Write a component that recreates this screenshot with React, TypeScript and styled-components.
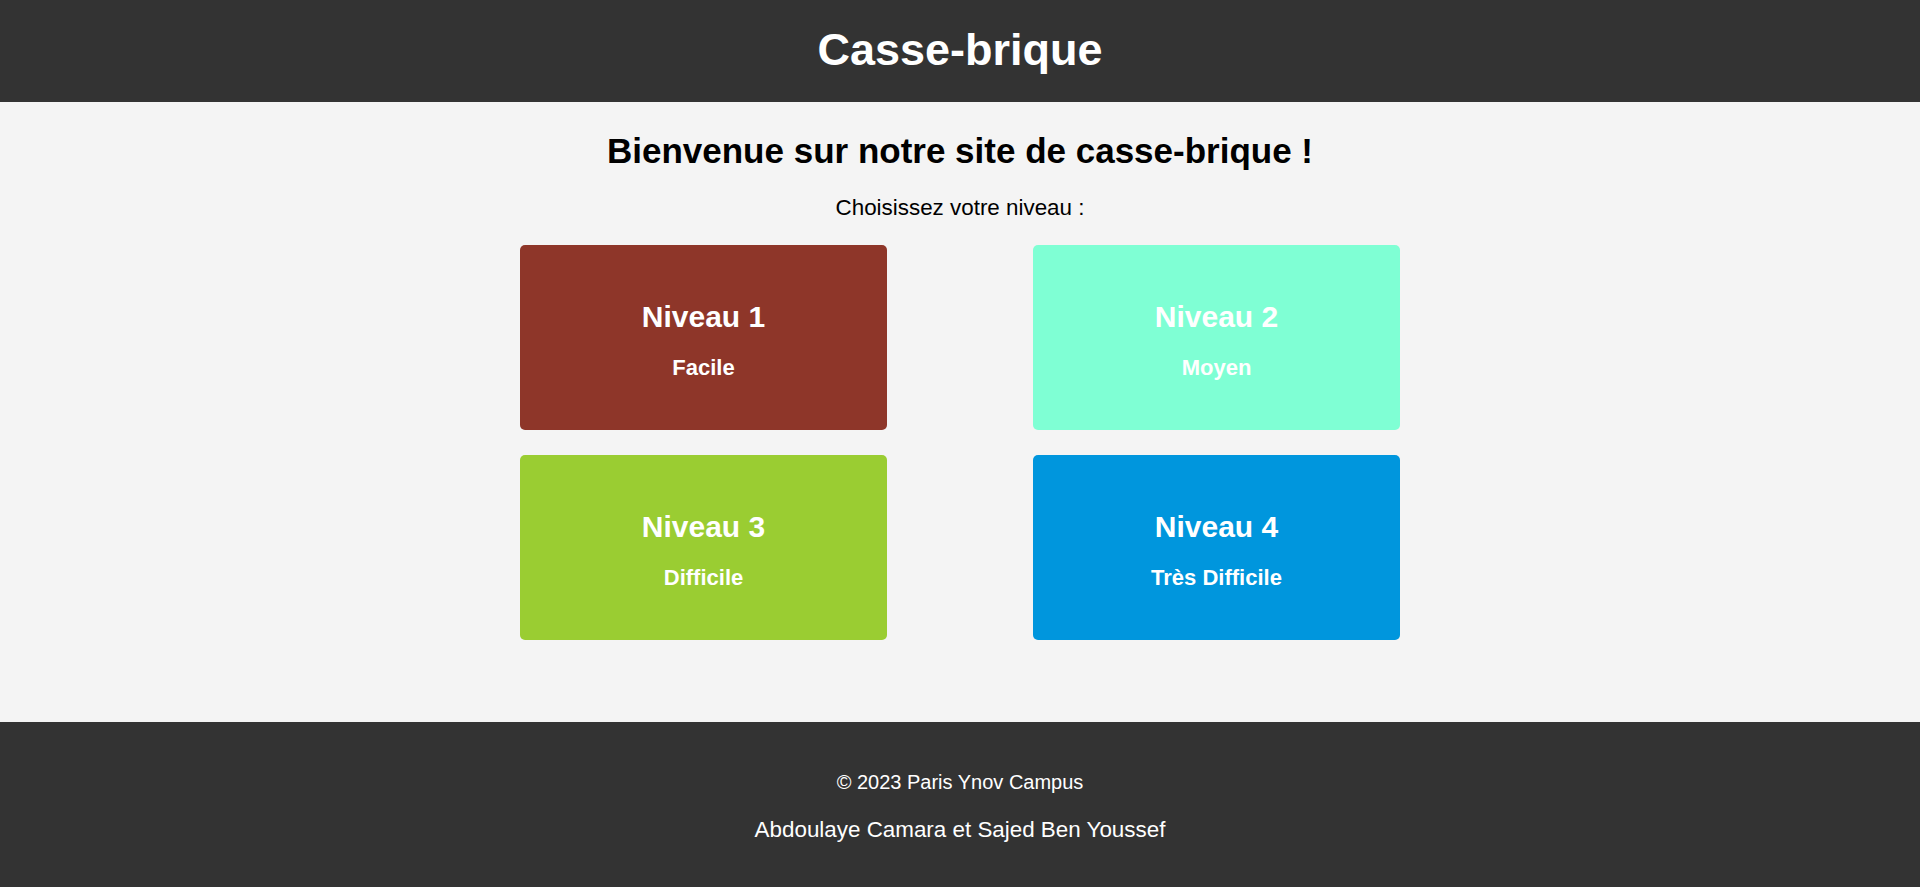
import React from "react";
import styled, { createGlobalStyle } from "styled-components";

const GlobalStyle = createGlobalStyle`
  * { box-sizing: border-box; }
  html, body { margin: 0; padding: 0; }
  body {
    font-family: "Liberation Sans", Arial, sans-serif;
    background: #f4f4f4;
    color: #000;
  }
`;

const Header = styled.header`
  background: #333333;
  height: 102px;
  padding-top: 27px;
  display: flex;
  justify-content: center;
`;

const Title = styled.h1`
  margin: 0;
  color: #ffffff;
  font-size: 45px;
  line-height: 1;
  font-weight: 700;
`;

const Main = styled.main`
  background: #f4f4f4;
  padding: 31px 0 82px;
  display: flex;
  flex-direction: column;
  align-items: center;
`;

const Welcome = styled.h2`
  margin: 0;
  font-size: 35px;
  line-height: 1;
  font-weight: 700;
  color: #000;
`;

const Prompt = styled.p`
  margin: 29px 0 0;
  font-size: 22.4px;
  line-height: 1;
  color: #000;
`;

const LevelGrid = styled.div`
  margin-top: 26px;
  display: grid;
  grid-template-columns: 367px 367px;
  column-gap: 146px;
  row-gap: 25px;
`;

const LevelCard = styled.a<{ $bg: string }>`
  display: flex;
  flex-direction: column;
  align-items: center;
  gap: 25px;
  height: 185px;
  padding-top: 57px;
  border-radius: 5px;
  background: ${(p) => p.$bg};
  color: #ffffff;
  text-decoration: none;
  cursor: pointer;
`;

const LevelName = styled.span`
  font-size: 30px;
  line-height: 1;
  font-weight: 700;
`;

const LevelDifficulty = styled.span`
  font-size: 22px;
  line-height: 1;
  font-weight: 700;
`;

const Footer = styled.footer`
  background: #333333;
  color: #ffffff;
  padding: 50px 0 45px;
  display: flex;
  flex-direction: column;
  align-items: center;
`;

const Copyright = styled.p`
  margin: 0;
  font-size: 20px;
  line-height: 1;
`;

const Authors = styled.p`
  margin: 27px 0 0;
  font-size: 22.4px;
  line-height: 1;
`;

const levels = [
  { name: "Niveau 1", difficulty: "Facile", color: "#8e3629" },
  { name: "Niveau 2", difficulty: "Moyen", color: "#7fffd4" },
  { name: "Niveau 3", difficulty: "Difficile", color: "#9acd32" },
  { name: "Niveau 4", difficulty: "Très Difficile", color: "#0096dd" },
];

export default function App() {
  return (
    <>
      <GlobalStyle />
      <Header>
        <Title>Casse-brique</Title>
      </Header>
      <Main>
        <Welcome>Bienvenue sur notre site de casse-brique !</Welcome>
        <Prompt>Choisissez votre niveau :</Prompt>
        <LevelGrid>
          {levels.map((l) => (
            <LevelCard key={l.name} $bg={l.color}>
              <LevelName>{l.name}</LevelName>
              <LevelDifficulty>{l.difficulty}</LevelDifficulty>
            </LevelCard>
          ))}
        </LevelGrid>
      </Main>
      <Footer>
        <Copyright>© 2023 Paris Ynov Campus</Copyright>
        <Authors>Abdoulaye Camara et Sajed Ben Youssef</Authors>
      </Footer>
    </>
  );
}
